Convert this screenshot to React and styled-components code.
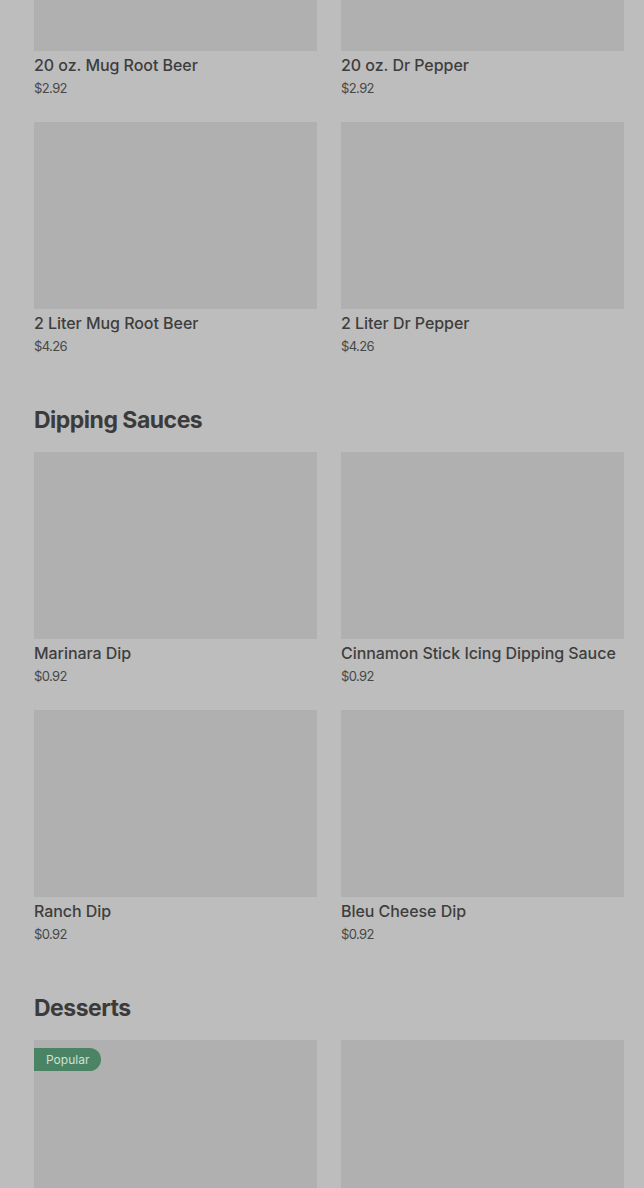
import React from "react";
import styled, { createGlobalStyle } from "styled-components";

const Global = createGlobalStyle`
  html, body { margin: 0; padding: 0; background: #bdbdbd; }
  body { font-family: Inter, "Noto Sans", "Liberation Sans", sans-serif; overflow: hidden; }
`;

const Page = styled.main`
  padding: 0 20px 0 34px;
  background: #bdbdbd;
  min-height: 1188px;
  overflow: hidden;
`;

const Scrolled = styled.div`
  margin-top: ${(p) => p.$offset}px;
`;

const Section = styled.section`
  margin-top: ${(p) => (p.$first ? 0 : 49)}px;
`;

const Heading = styled.h2`
  margin: 0 0 16px;
  font-size: 23px;
  line-height: 32px;
  font-weight: 700;
  letter-spacing: -0.5px;
  color: #3b3b3b;
`;

const Grid = styled.div`
  display: grid;
  grid-template-columns: 283px 283px;
  column-gap: 24px;
  row-gap: 25px;
`;

const Card = styled.div`
  display: flex;
  flex-direction: column;
`;

const Thumb = styled.div`
  position: relative;
  height: 187px;
  background: #b0b0b0;
`;

const Badge = styled.span`
  position: absolute;
  top: 8px;
  left: 0;
  height: 23px;
  padding: 0 12px 0 12px;
  display: flex;
  align-items: center;
  background: #4b8465;
  color: #cfe0d5;
  font-size: 12px;
  font-weight: 400;
  border-radius: 0 12px 12px 0;
`;

const Title = styled.div`
  margin-top: 4px;
  font-size: 16px;
  line-height: 20px;
  font-weight: 500;
  color: #3e3e3e;
  letter-spacing: -0.05px;
  white-space: nowrap;
`;

const Price = styled.div`
  margin-top: 4px;
  font-size: 13px;
  line-height: 18px;
  font-weight: 400;
  color: #474747;
  letter-spacing: -0.6px;
`;

const sections = [
  {
    title: null,
    items: [
      { name: "20 oz. Mug Root Beer", price: "$2.92" },
      { name: "20 oz. Dr Pepper", price: "$2.92" },
      { name: "2 Liter Mug Root Beer", price: "$4.26" },
      { name: "2 Liter Dr Pepper", price: "$4.26" },
    ],
  },
  {
    title: "Dipping Sauces",
    items: [
      { name: "Marinara Dip", price: "$0.92" },
      { name: "Cinnamon Stick Icing Dipping Sauce", price: "$0.92" },
      { name: "Ranch Dip", price: "$0.92" },
      { name: "Bleu Cheese Dip", price: "$0.92" },
    ],
  },
  {
    title: "Desserts",
    items: [
      { name: "Cinnamon Sticks", price: "$6.99", badge: "Popular" },
      { name: "Chocolate Chip Cookie", price: "$7.99" },
    ],
  },
];

export default function App() {
  return (
    <>
      <Global />
      <Page>
        <Scrolled $offset={-136}>
          {sections.map((s, i) => (
            <Section key={i} $first={i === 0}>
              {s.title && <Heading>{s.title}</Heading>}
              <Grid>
                {s.items.map((it) => (
                  <Card key={it.name}>
                    <Thumb>{it.badge && <Badge>{it.badge}</Badge>}</Thumb>
                    <Title>{it.name}</Title>
                    <Price>{it.price}</Price>
                  </Card>
                ))}
              </Grid>
            </Section>
          ))}
        </Scrolled>
      </Page>
    </>
  );
}
